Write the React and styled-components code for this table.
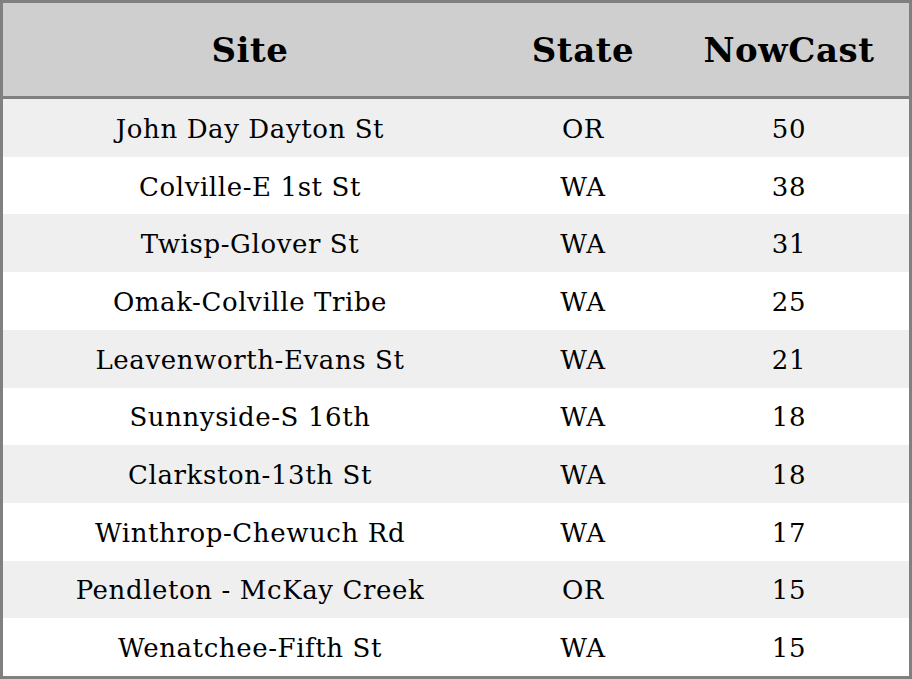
import styled, { createGlobalStyle } from "styled-components";

const rows = [
  ["John Day Dayton St", "OR", "50"],
  ["Colville-E 1st St", "WA", "38"],
  ["Twisp-Glover St", "WA", "31"],
  ["Omak-Colville Tribe", "WA", "25"],
  ["Leavenworth-Evans St", "WA", "21"],
  ["Sunnyside-S 16th", "WA", "18"],
  ["Clarkston-13th St", "WA", "18"],
  ["Winthrop-Chewuch Rd", "WA", "17"],
  ["Pendleton - McKay Creek", "OR", "15"],
  ["Wenatchee-Fifth St", "WA", "15"],
];

function App() {
  return (
    <>
      <GlobalStyle />
      <Table>
        <Header>
          <HeadCell>Site</HeadCell>
          <HeadCell>State</HeadCell>
          <HeadCell>NowCast</HeadCell>
        </Header>
        {rows.map((r, i) => (
          <Row key={i} striped={i % 2 === 0}>
            {r.map((c, j) => (
              <Cell key={j}>{c}</Cell>
            ))}
          </Row>
        ))}
      </Table>
    </>
  );
}

export default App;

const GlobalStyle = createGlobalStyle`
  html, body {
    margin: 0;
    padding: 0;
    background: #fff;
  }
  body {
    font-family: "DejaVu Serif", serif;
  }
`;

const Table = styled.div`
  box-sizing: border-box;
  width: 912px;
  height: 679px;
  border: 3px solid #808080;
  display: grid;
  grid-template-rows: 96px repeat(10, 1fr);
`;

const Header = styled.div`
  display: grid;
  grid-template-columns: 494px 172px 240px;
  background: #cfcfcf;
  border-bottom: 3px solid #808080;
`;

const HeadCell = styled.div`
  display: flex;
  align-items: center;
  justify-content: center;
  font-size: 34px;
  letter-spacing: 0.6px;
  font-weight: bold;
  color: #000;
`;

const Row = styled.div`
  display: grid;
  grid-template-columns: 494px 172px 240px;
  background: ${(p) => (p.striped ? "#efefef" : "#fff")};
`;

const Cell = styled.div`
  display: flex;
  align-items: center;
  justify-content: center;
  padding-top: 2px;
  font-size: 26px;
  letter-spacing: 0.6px;
  color: #000;
`;
